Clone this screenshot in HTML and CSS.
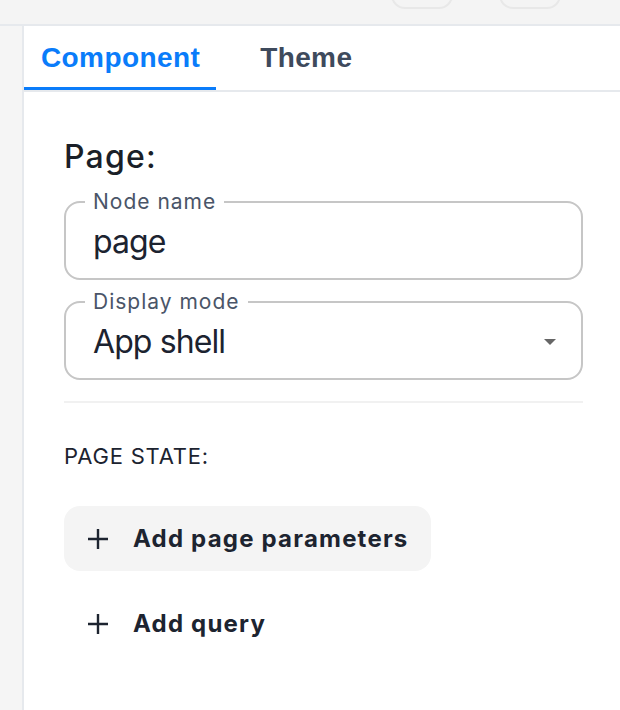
FILE: index.html
```html
<!DOCTYPE html>
<html lang="en">
<head>
    <meta charset="UTF-8">
    <meta name="viewport" content="width=device-width, initial-scale=1.0">
    <title>Page settings</title>
    <link rel="stylesheet" href="styles.css">
</head>
<body>
    <div class="topbar">
        <button class="top-btn"></button>
        <button class="top-btn"></button>
    </div>

    <div class="main">
        <div class="rail"></div>

        <div class="panel">
            <div class="tabs">
                <div class="tab active">Component</div>
                <div class="tab">Theme</div>
            </div>

            <div class="content">
                <h2 class="title">Page:</h2>

                <fieldset class="field">
                    <legend>Node name</legend>
                    <div class="field-value">page</div>
                </fieldset>

                <fieldset class="field">
                    <legend>Display mode</legend>
                    <div class="field-value select">
                        <span>App shell</span>
                        <span class="caret"></span>
                    </div>
                </fieldset>

                <hr class="divider">

                <div class="section-label">PAGE STATE:</div>

                <div class="actions">
                    <button class="action hover">
                        <svg width="22" height="22" viewBox="0 0 22 22"><path d="M11 1v20M1 11h20" stroke="#1d2430" stroke-width="2.4" fill="none"/></svg>
                        <span>Add page parameters</span>
                    </button>
                    <button class="action">
                        <svg width="22" height="22" viewBox="0 0 22 22"><path d="M11 1v20M1 11h20" stroke="#1d2430" stroke-width="2.4" fill="none"/></svg>
                        <span>Add query</span>
                    </button>
                </div>
            </div>
        </div>
    </div>
</body>
</html>
```

FILE: styles.css
```css
body {
    margin: 0;
    font-family: Inter, "Noto Sans", sans-serif;
    color: #1c2330;
    background: #fff;
}

.topbar {
    height: 24px;
    background: #f4f4f4;
    border-bottom: 2px solid #e6e9ed;
    display: flex;
    gap: 46px;
    padding-left: 391px;
}

.top-btn {
    width: 62px;
    height: 30px;
    margin-top: -21px;
    border: 2px solid #e8e8e8;
    border-radius: 14px;
    background: #f4f4f4;
}

.main {
    display: flex;
    min-height: calc(100vh - 26px);
}

.rail {
    width: 22px;
    background: #f5f5f5;
    border-right: 2px solid #e6e9ed;
}

.panel {
    flex: 1;
}

.tabs {
    display: flex;
    gap: 27px;
    border-bottom: 2px solid #e6e9ed;
}

.tab {
    font-family: "Liberation Sans", Arial, sans-serif;
    font-weight: bold;
    font-size: 28px;
    letter-spacing: 0.4px;
    line-height: 32px;
    padding: 16px 16px 13px 17px;
    color: #3e4a5c;
    border-bottom: 3px solid transparent;
}

.tab.active {
    color: #0a7cfa;
    border-bottom-color: #0a7cfa;
}

.content {
    padding: 45px 37px 0 40px;
}

.title {
    margin: 0 0 13px;
    font-size: 32px;
    line-height: 40px;
    font-weight: 500;
    letter-spacing: 1.2px;
    color: #1a1f28;
}

.field {
    margin: 0 0 10px;
    padding: 8px 25px 16px 27px;
    border: 2px solid #c6c6c6;
    border-radius: 16px;
}

.field legend {
    margin-left: -8px;
    padding: 0 8px;
    font-size: 21px;
    line-height: 24px;
    letter-spacing: 1px;
    color: #4a5568;
}

.field-value {
    font-size: 32px;
    line-height: 40px;
    letter-spacing: -0.9px;
    color: #1c2330;
}

.select {
    display: flex;
    align-items: center;
    justify-content: space-between;
}

.caret {
    width: 0;
    height: 0;
    border-left: 6px solid transparent;
    border-right: 6px solid transparent;
    border-top: 6px solid #666;
}

.divider {
    margin: 21px 0 0;
    border: none;
    border-top: 2px solid #f1f1f1;
}

.section-label {
    margin-top: 39px;
    font-size: 22px;
    line-height: 28px;
    letter-spacing: 0.8px;
    color: #1c2330;
}

.actions {
    display: flex;
    flex-direction: column;
    align-items: flex-start;
    gap: 20px;
    margin-top: 36px;
}

.action {
    display: inline-flex;
    align-items: center;
    gap: 24px;
    height: 65px;
    padding: 0 22px 0 23px;
    border: none;
    border-radius: 16px;
    background: transparent;
    font-family: Inter, "Noto Sans", sans-serif;
    font-size: 24px;
    font-weight: 700;
    letter-spacing: 1.2px;
    color: #1d2430;
}

.action.hover {
    background: #f4f4f4;
}
```
